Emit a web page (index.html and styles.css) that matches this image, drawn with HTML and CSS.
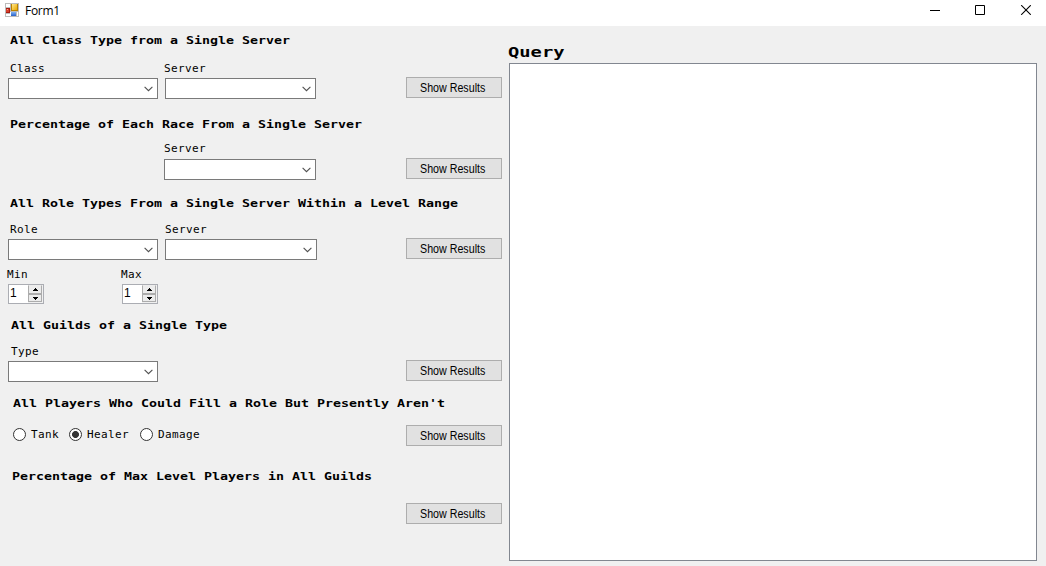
FILE: index.html
```html
<!DOCTYPE html>
<html lang="en">
<head>
<meta charset="utf-8">
<title>Form1</title>
<link rel="stylesheet" href="styles.css">
</head>
<body>
<svg class="defs" width="0" height="0">
  <symbol id="chev" viewBox="0 0 9 6"><path d="M.6 .8 4.5 4.7 8.4 .8" fill="none" stroke="#505050" stroke-width="1.1"/></symbol>
  <symbol id="up" viewBox="0 0 5 3"><path d="M2 0h1v1h1v1h1v1H0V2h1V1h1z"/></symbol>
  <symbol id="down" viewBox="0 0 5 3"><path d="M0 0h5v1H4v1H3v1H2V2H1V1H0z"/></symbol>
</svg>
<header class="titlebar">
  <svg class="app-icon" width="14" height="14" viewBox="0 0 14 14" shape-rendering="crispEdges">
    <defs>
      <linearGradient id="gold" x1="0" y1="0" x2="1" y2="1"><stop offset="0" stop-color="#ffe88c"/><stop offset="1" stop-color="#e9a800"/></linearGradient>
      <linearGradient id="blue" x1="0" y1="0" x2="0" y2="1"><stop offset="0" stop-color="#7fb2f5"/><stop offset="1" stop-color="#2b62c8"/></linearGradient>
    </defs>
    <path fill="#bcbcbc" d="M0 0h14v14H0z"/>
    <path fill="#fff" d="M1 1h4v3H1zM1 11h4v2H1zM12 9h1v4h-1z"/>
    <path fill="#a81c10" d="M1 5h4v5H1z"/><path fill="#d8402c" d="M1 6h3v3H1z"/><path fill="#f7a090" d="M2 6h1v1H2z"/>
    <path fill="#b98200" d="M6 1h7v7H6z"/><path fill="url(#gold)" d="M7 1h5v6H7z"/>
    <path fill="#fff" d="M5 9h1v4H5z"/><path fill="url(#blue)" d="M6 9h5v4H6z"/>
  </svg>
  <span class="title">Form1</span>
  <svg class="window-buttons" width="101" height="10" viewBox="0 0 101 10">
    <path d="M0 5h10v1H0z"/>
    <path d="M45.5 .5h9v9h-9z" fill="none" stroke="#000"/>
    <path d="M91.2 .2l9.6 9.6M100.8 .2l-9.6 9.6" fill="none" stroke="#000" stroke-width="1.1"/>
  </svg>
</header>
<main class="form">
  <div class="filters">
    <section class="group group-class">
      <h2>All Class Type from a Single Server</h2>
      <div class="labels"><label class="first">Class</label><label>Server</label></div>
      <div class="row">
        <div class="combo"><svg><use href="#chev"/></svg></div>
        <div class="combo second"><svg><use href="#chev"/></svg></div>
        <button><span>Show Results</span></button>
      </div>
    </section>
    <section class="group group-race">
      <h2>Percentage of Each Race From a Single Server</h2>
      <div class="labels"><label class="first"></label><label>Server</label></div>
      <div class="row">
        <div class="combo only"><svg><use href="#chev"/></svg></div>
        <button><span>Show Results</span></button>
      </div>
    </section>
    <section class="group group-role">
      <h2>All Role Types From a Single Server Within a Level Range</h2>
      <div class="labels"><label class="first">Role</label><label>Server</label></div>
      <div class="row">
        <div class="combo"><svg><use href="#chev"/></svg></div>
        <div class="combo second wide"><svg><use href="#chev"/></svg></div>
        <button><span>Show Results</span></button>
      </div>
      <div class="range">
        <div class="bound"><label>Min</label>
          <div class="spinner"><span>1</span><div class="steps"><i><svg><use href="#up"/></svg></i><i><svg><use href="#down"/></svg></i></div></div></div>
        <div class="bound"><label>Max</label>
          <div class="spinner"><span>1</span><div class="steps"><i><svg><use href="#up"/></svg></i><i><svg><use href="#down"/></svg></i></div></div></div>
      </div>
    </section>
    <section class="group group-guild">
      <h2>All Guilds of a Single Type</h2>
      <div class="labels"><label class="first">Type</label></div>
      <div class="row">
        <div class="combo"><svg><use href="#chev"/></svg></div>
        <button><span>Show Results</span></button>
      </div>
    </section>
    <section class="group group-players">
      <h2>All Players Who Could Fill a Role But Presently Aren't</h2>
      <div class="row">
        <div class="radios">
          <span class="radio"></span><label class="tank">Tank</label>
          <span class="radio checked"></span><label class="healer">Healer</label>
          <span class="radio"></span><label>Damage</label>
        </div>
        <button><span>Show Results</span></button>
      </div>
    </section>
    <section class="group group-max">
      <h2>Percentage of Max Level Players in All Guilds</h2>
      <div class="row"><button><span>Show Results</span></button></div>
    </section>
  </div>
  <div class="output">
    <h1>Query</h1>
    <div class="query"></div>
  </div>
</main>
</body>
</html>
```
FILE: styles.css
```css
* { box-sizing: border-box; }
body {
  margin: 0;
  height: 566px;
  overflow: hidden;
  background: #f0f0f0;
  color: #000;
  font-family: "DejaVu Sans Mono", monospace;
  font-size: 11px;
  display: flex;
  flex-direction: column;
}
.defs { position: absolute; }

.titlebar {
  height: 26px;
  flex: none;
  background: #fff;
  display: flex;
  align-items: flex-start;
  padding: 3px 15px 0 5px;
}
.title {
  font: 12px/16px "Open Sans", sans-serif;
  letter-spacing: -0.3px;
  margin-left: 6px;
}
.window-buttons { margin: 2px 0 0 auto; }

.form { flex: 1; display: flex; }
.filters { width: 502px; padding: 7px 0 0 8px; }
.group { display: flex; flex-direction: column; }
.group-class { height: 84px; }
.group-race { height: 79px; }
.group-role { height: 122px; }
.group-guild { height: 78px; }
.group-players { height: 73px; }

h1, h2 {
  width: fit-content;
  margin: 0;
  font-weight: bold;
  white-space: nowrap;
  transform-origin: 0 50%;
}
h2 {
  font-size: 11px;
  line-height: 16px;
  margin-left: 2px;
  transform: scaleX(1.208);
}
.group-guild h2 { margin-left: 3px; }
.group-players h2 { margin-left: 5px; }
.group-max h2 { margin-left: 4px; }

label {
  letter-spacing: 0.38px;
  line-height: 16px;
  white-space: nowrap;
}
.labels { display: flex; height: 16px; margin: 12px 0 0 2px; }
.labels .first { width: 154px; }
.group-race .labels { margin: 8px 0 1px 2px; }
.group-role .labels { margin-top: 10px; }
.group-role .labels .first { width: 155px; }
.group-guild .labels { margin: 10px 0 0 3px; }

.row { display: flex; align-items: flex-start; height: 22px; }
.combo {
  width: 150px;
  height: 21px;
  margin-top: 1px;
  border: 1px solid #7a7a7a;
  background: #fff;
  display: flex;
  align-items: center;
  justify-content: flex-end;
  padding-right: 4px;
}
.combo svg { width: 9px; height: 6px; }
.combo.second { width: 151px; margin-left: 7px; }
.combo.wide { width: 152px; }
.combo.only { width: 152px; margin-left: 156px; }

button {
  width: 96px;
  height: 21px;
  margin-left: auto;
  padding: 1px 2px 0 0;
  border: 1px solid #adadad;
  background: #e1e1e1;
  color: #000;
  font: 12px/18px "Liberation Sans", sans-serif;
}
button span { display: inline-block; white-space: nowrap; transform: scaleX(0.89); }

.range { display: flex; margin-top: 7px; }
.bound { width: 114px; }
.bound label { display: block; margin-left: -1px; }
.spinner {
  width: 36px;
  height: 20px;
  margin-top: 1px;
  border: 1px solid #abadb3;
  background: #fff;
  display: flex;
  justify-content: space-between;
}
.spinner span { font: 12px/17px "Liberation Sans", sans-serif; padding-left: 1px; }
.steps {
  width: 15px;
  padding-right: 1px;
  background: #f0f0f0;
}
.steps i {
  display: flex;
  align-items: center;
  justify-content: center;
  height: 9px;
  border: 1px solid #acacac;
  background: #ececec;
}
.steps i:first-child { border-top-color: #ececec; }
.steps i:last-child { height: 8px; }
.steps svg { width: 5px; height: 3px; }

.group-players .row { margin-top: 13px; }
.group-max .row { margin-top: 18px; }
.radios { display: flex; align-items: center; height: 19px; padding-left: 5px; }
.radio {
  width: 13px;
  height: 13px;
  margin-right: 5px;
  border: 1px solid #333;
  border-radius: 50%;
  background: #fff;
}
.checked { background: radial-gradient(circle, #333 3.1px, #fff 3.8px); }
.radios label { margin-top: 1px; }
.radios .tank { width: 38px; }
.radios .healer { width: 53px; }

.output { flex: 1; padding: 16px 9px 5px 7px; display: flex; flex-direction: column; }
h1 {
  font-size: 14px;
  line-height: 21px;
  margin-left: -1px;
  transform: scaleX(1.34);
}
.query { flex: 1; border: 1px solid #828790; background: #fff; }
```
